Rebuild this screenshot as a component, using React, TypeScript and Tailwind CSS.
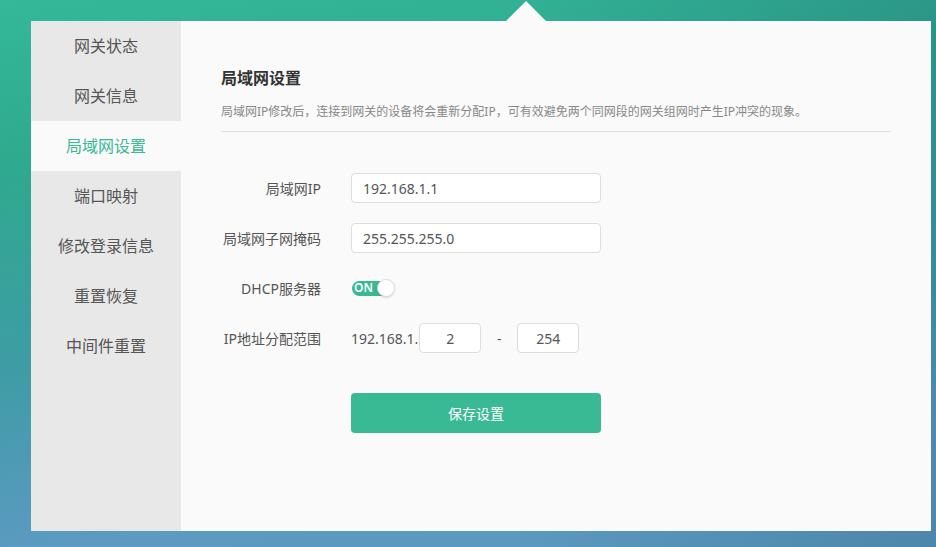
import React from "react";

const menu = ["网关状态", "网关信息", "局域网设置", "端口映射", "修改登录信息", "重置恢复", "中间件重置"];

export default function App() {
  return (
    <div
      className="relative w-[936px] h-[547px] overflow-hidden pt-[21px] pl-[31px] pr-[5px] pb-[16px] bg-[linear-gradient(172deg,#34b899_0%,#2fa98f_25%,#3f9ca5_55%,#5c9ac2_82%,#5a97bd_100%)]"
      style={{ fontFamily: '"Noto Sans", "Noto Sans CJK SC", sans-serif' }}
    >
      <div className="pointer-events-none absolute inset-0 bg-[linear-gradient(to_right,rgba(0,0,0,0)_55%,rgba(25,70,100,0.2)_100%)]" />
      <div className="absolute left-[506px] top-[1px] w-0 h-0 border-l-[20px] border-r-[20px] border-b-[20px] border-l-transparent border-r-transparent border-b-[#fafafa]" />
      <div className="relative flex h-full w-full bg-[#fafafa]">
        <nav className="w-[150px] shrink-0 bg-[#e8e8e8] flex flex-col">
          {menu.map((m, i) => (
            <div
              key={m}
              className={
                i === 2
                  ? "h-[50px] flex items-center justify-center text-[16px] text-[#37b994] bg-[#fafafa]"
                  : "h-[50px] flex items-center justify-center text-[16px] text-[#555]"
              }
            >
              {m}
            </div>
          ))}
        </nav>
        <main className="flex-1 pl-[40px] pr-[40px] pt-[45px]">
          <div className="border-b border-[#dddddd] pb-[9px]">
            <h1 className="text-[16px] leading-[24px] font-bold text-[#333]">局域网设置</h1>
            <p className="mt-[12px] text-[12px] leading-[20px] text-[#888]">
              局域网IP修改后，连接到网关的设备将会重新分配IP，可有效避免两个同网段的网关组网时产生IP冲突的现象。
            </p>
          </div>
          <div className="mt-[41px] flex flex-col gap-[20px] text-[14px] text-[#555]">
            <div className="flex items-center h-[30px]">
              <label className="w-[100px] text-right">局域网IP</label>
              <input
                readOnly
                value="192.168.1.1"
                className="ml-[30px] w-[250px] h-[30px] rounded-[4px] border border-[#dddddd] bg-white px-[11px] text-[14px] text-[#555] outline-none"
              />
            </div>
            <div className="flex items-center h-[30px]">
              <label className="w-[100px] text-right">局域网子网掩码</label>
              <input
                readOnly
                value="255.255.255.0"
                className="ml-[30px] w-[250px] h-[30px] rounded-[4px] border border-[#dddddd] bg-white px-[11px] text-[14px] text-[#555] outline-none"
              />
            </div>
            <div className="flex items-center h-[30px]">
              <label className="w-[100px] text-right">DHCP服务器</label>
              <div className="ml-[31px] relative w-[43px] h-[18px] flex items-center">
                <div className="h-[15px] w-[39px] rounded-full bg-[#37b994] flex items-center pl-[2px] text-[12px] leading-none font-semibold text-white">
                  ON
                </div>
                <div className="absolute right-0 top-0 w-[18px] h-[18px] rounded-full bg-white border border-[#dddddd] shadow-[0_1px_2px_rgba(0,0,0,0.15)]" />
              </div>
            </div>
            <div className="flex items-center h-[30px]">
              <label className="w-[100px] text-right">IP地址分配范围</label>
              <span className="ml-[30px]">192.168.1.</span>
              <input
                readOnly
                value="2"
                className="ml-[1px] w-[62px] h-[30px] rounded-[4px] border border-[#dddddd] bg-white text-center text-[14px] text-[#555] outline-none"
              />
              <span className="w-[36px] text-center">-</span>
              <input
                readOnly
                value="254"
                className="w-[62px] h-[30px] rounded-[4px] border border-[#dddddd] bg-white text-center text-[14px] text-[#555] outline-none"
              />
            </div>
          </div>
          <button className="mt-[40px] ml-[130px] w-[250px] h-[40px] rounded-[4px] bg-[#3aba94] text-white text-[14px]">
            保存设置
          </button>
        </main>
      </div>
    </div>
  );
}
